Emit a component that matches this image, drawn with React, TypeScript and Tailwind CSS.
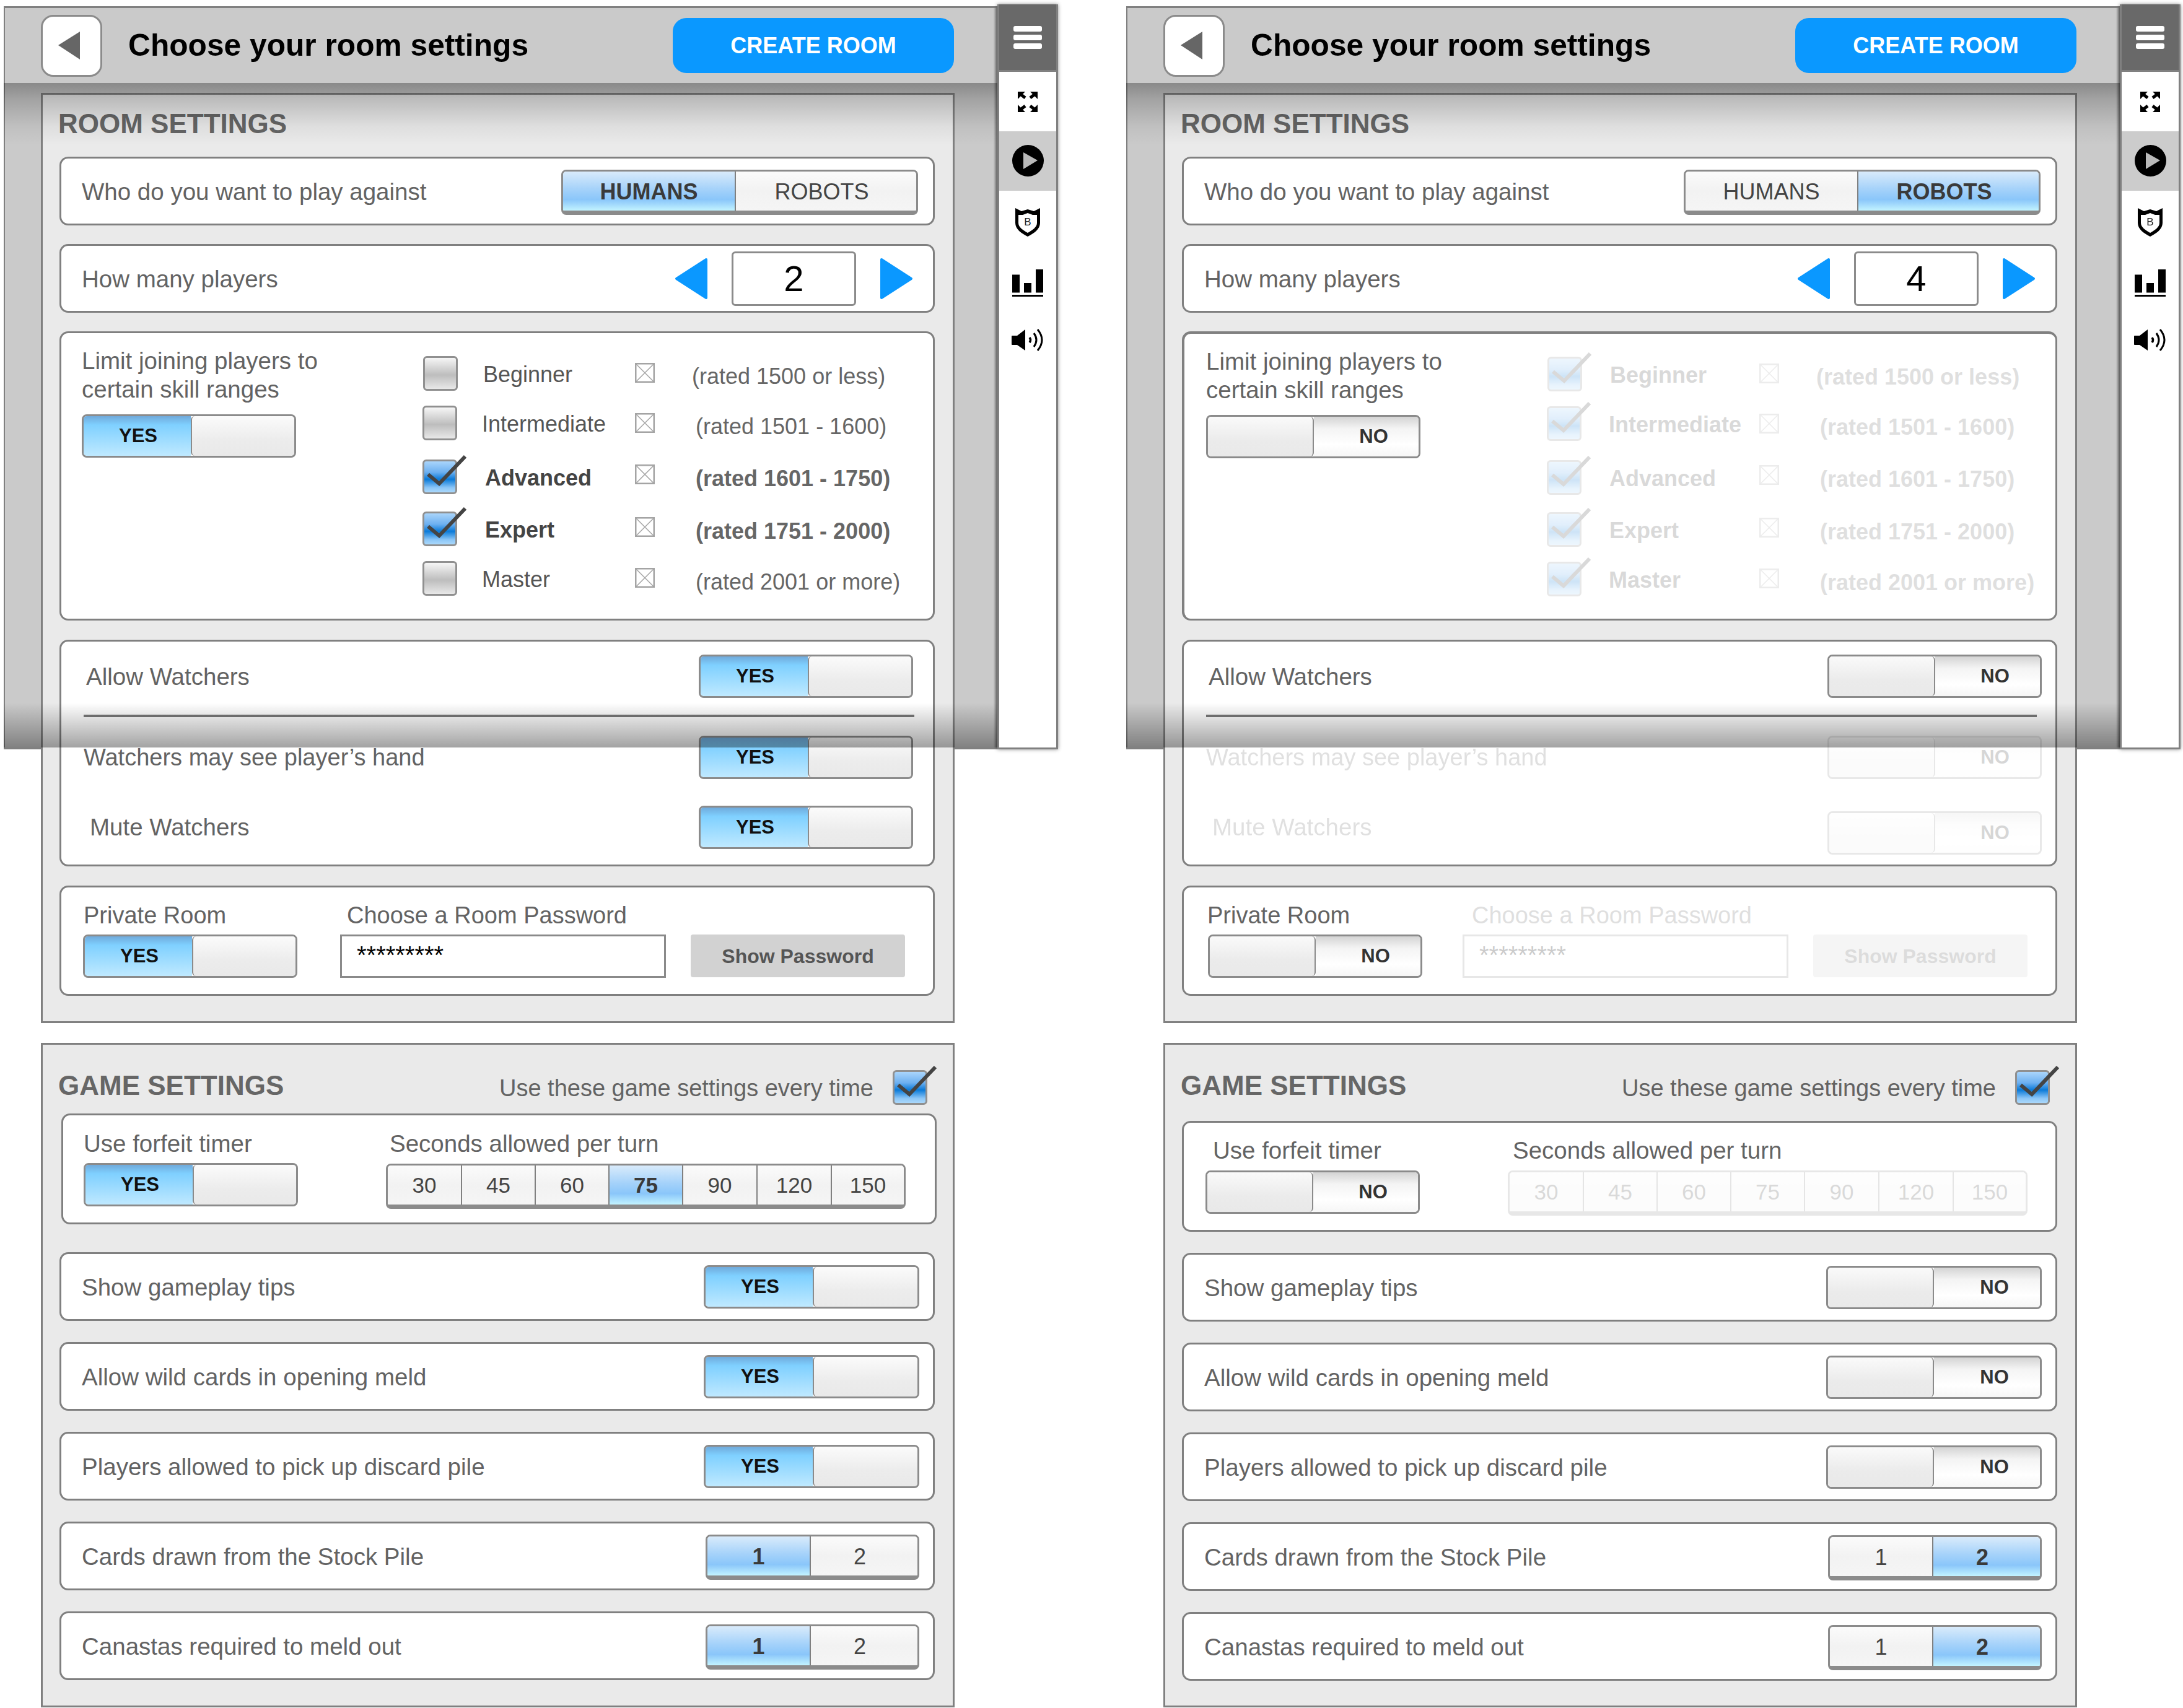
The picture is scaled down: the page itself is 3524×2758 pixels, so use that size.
import React from 'react';

const LABEL = 'text-[38.5px] leading-[46px] text-[#636363] whitespace-nowrap';
const LABEL_SM = 'text-[38px] leading-[46px] text-[#636363] whitespace-nowrap';
const CARD = 'rounded-[14px] border-[3px] border-[#808080] bg-white';

const RANGES = [
  { name: 'Beginner', rated: '(rated 1500 or less)', h: 'h-[80px]', boxMl: 'ml-[1px]', nameA: 'pl-[2px]', nameB: 'pl-[6px]', xMt: 'mt-[11px]', rMt: 'mt-[11px]', rA: 'pl-0', rB: 'pl-0', checked: false },
  { name: 'Intermediate', rated: '(rated 1501 - 1600)', h: 'h-[87px]', boxMl: 'ml-0', nameA: 'pl-0', nameB: 'pl-[4px]', xMt: 'mt-[12px]', rMt: 'mt-[12px]', rA: 'pl-[6px]', rB: 'pl-[6px]', checked: false },
  { name: 'Advanced', rated: '(rated 1601 - 1750)', h: 'h-[84px]', boxMl: 'ml-0', nameA: 'pl-[5px]', nameB: 'pl-[5px]', xMt: 'mt-[8px]', rMt: 'mt-[9px]', rA: 'pl-[6px]', rB: 'pl-[6px]', checked: true },
  { name: 'Expert', rated: '(rated 1751 - 2000)', h: 'h-[80px]', boxMl: 'ml-0', nameA: 'pl-[5px]', nameB: 'pl-[5px]', xMt: 'mt-[9px]', rMt: 'mt-[10px]', rA: 'pl-[6px]', rB: 'pl-[6px]', checked: true },
  { name: 'Master', rated: '(rated 2001 or more)', h: 'h-[80px]', boxMl: 'ml-0', nameA: 'pl-0', nameB: 'pl-[4px]', xMt: 'mt-[11px]', rMt: 'mt-[12px]', rA: 'pl-[6px]', rB: 'pl-[6px]', checked: false },
];

const Toggle = ({ on, wide = false, className = '' }: { on: boolean; wide?: boolean; className?: string }) =>
  on ? (
    <div className={`flex h-[70px] shrink-0 overflow-hidden rounded-[8px] border-[3px] border-[#8b8b8b] ${wide ? 'w-[348px]' : 'w-[346px]'} ${className}`}>
      <div className="flex w-[173px] items-center justify-center bg-[linear-gradient(#70aadb_0%,#7fd0ff_22%,#bfe9ff_100%)] pl-[3px] pt-[1px] text-[31px] font-bold text-[#111]">YES</div>
      <div className="flex-1 rounded-l-[6px] border-l-[2px] border-[#8b8b8b] bg-[linear-gradient(#fbfbfb,#ececec_60%,#e9e9e9)]" />
    </div>
  ) : (
    <div className={`flex h-[70px] shrink-0 overflow-hidden rounded-[8px] border-[3px] border-[#8b8b8b] ${wide ? 'w-[348px]' : 'w-[346px]'} ${className}`}>
      <div className="w-[171px] rounded-r-[6px] border-r-[2px] border-[#8b8b8b] bg-[linear-gradient(#fafafa,#ebebeb_60%,#e9e9e9)]" />
      <div className="flex flex-1 items-center justify-center bg-[linear-gradient(#d4d4d4_0%,#f4f4f4_30%,#ffffff_70%,#f6f6f6)] pl-[24px] pt-[1px] text-[31px] font-bold text-[#333]">NO</div>
    </div>
  );

const Seg = ({ items, selected, widths, className = '', textClass = 'text-[36px]' }: { items: string[]; selected: number; widths: string[]; className?: string; textClass?: string }) => (
  <div className={`flex h-[73px] shrink-0 overflow-hidden rounded-[8px] border-[3px] border-b-[7px] border-[#8b8b8b] ${className}`}>
    {items.map((item, i) => (
      <div
        key={item}
        className={`flex items-center justify-center pt-[2px] ${textClass} ${widths[i]} ${i > 0 ? 'border-l-[2px] border-[#808080]' : ''} ${
          items.length === 2 && i === 1 ? 'pr-[14px]' : ''
        } ${
          i === selected
            ? 'bg-[linear-gradient(#d9ebfb,#a5d2fa_45%,#8ac6fa_72%,#c2f3ff)] font-bold text-[#3a3a3a]'
            : 'bg-[linear-gradient(#fbfbfb,#f2f2f2_50%,#f5f5f5)] text-[#444]'
        }`}
      >
        {item}
      </div>
    ))}
  </div>
);

const CheckBox = ({ checked, className = '' }: { checked: boolean; className?: string }) => (
  <div
    className={`relative h-[56px] w-[56px] rounded-[6px] border-[3px] border-[#909090] ${
      checked
        ? 'bg-[linear-gradient(#aad5fb,#6db0f0_35%,#0a7ad8_58%,#8cc6f7_85%,#aad8fb)]'
        : 'bg-[linear-gradient(#f6f6f6,#bdbdbd_55%,#e8e8e8)]'
    } ${className}`}
  >
    {checked && (
      <svg className="absolute left-[-3px] top-[-3px] overflow-visible" width="56" height="56" viewBox="0 0 56 56" fill="none">
        <path d="M9 24 L27 39 L69 -5" stroke="#444" strokeWidth="6" />
      </svg>
    )}
  </div>
);

const XBox = ({ className = '' }: { className?: string }) => (
  <svg className={className} width="32" height="32" viewBox="0 0 32 32" fill="none" stroke="#a4a4a4">
    <rect x="1.25" y="1.25" width="29.5" height="29.5" strokeWidth="2.5" />
    <path d="M1 1 L31 31 M31 1 L1 31" strokeWidth="1.5" />
  </svg>
);

const Arrow = ({ right = false }: { right?: boolean }) => (
  <svg width="54" height="68" viewBox="0 0 54 68" fill="#0a98ff" stroke="#0a98ff" strokeWidth="4" strokeLinejoin="round">
    <path d={right ? 'M3 3 L51 34 L3 65 Z' : 'M51 3 L3 34 L51 65 Z'} />
  </svg>
);

const Row = ({ label, children }: { label: string; children: React.ReactNode }) => (
  <div className={`${CARD} flex h-[111px] items-center justify-between pl-[33px] pr-[22px]`}>
    <span className={`${LABEL} pt-[2px]`}>{label}</span>
    {children}
  </div>
);

const Sidebar = () => (
  <div className="absolute left-[1610px] top-[7px] z-30 flex h-[1203px] w-[98px] flex-col items-center border-x-[3px] border-b-[3px] border-[#808080] bg-white shadow-[0_0_6px_rgba(0,0,0,0.45)]">
    <div className="flex h-[109px] w-full items-center justify-center border-b-[3px] border-[#808080] bg-[#696969]">
      <svg width="46" height="37" viewBox="0 0 46 37" fill="#fff">
        <rect y="0" width="46" height="9" rx="3" />
        <rect y="14" width="46" height="9" rx="3" />
        <rect y="28" width="46" height="9" rx="3" />
      </svg>
    </div>
    <div className="flex h-[96px] w-full items-center justify-center">
      <svg width="32" height="33" viewBox="0 0 32 33">
        <g fill="#000" stroke="#000">
          <path d="M0 0 H12 L0 12 Z" strokeWidth="0" />
          <path d="M3 3 L12 10" strokeWidth="5" />
          <path d="M32 0 H20 L32 12 Z" strokeWidth="0" />
          <path d="M29 3 L20 10" strokeWidth="5" />
          <path d="M0 33 H12 L0 21 Z" strokeWidth="0" />
          <path d="M3 30 L12 23" strokeWidth="5" />
          <path d="M32 33 H20 L32 21 Z" strokeWidth="0" />
          <path d="M29 30 L20 23" strokeWidth="5" />
        </g>
      </svg>
    </div>
    <div className="flex h-[96px] w-full items-center justify-center bg-[#cccccc] pb-[2px]">
      <svg width="51" height="51" viewBox="0 0 51 51">
        <circle cx="25.5" cy="25.5" r="25.5" fill="#000" />
        <path d="M18 12 L41 25 L18 39 Z" fill="#b9b9b9" />
      </svg>
    </div>
    <div className="flex h-[96px] w-full items-center justify-center pt-[6px]">
      <svg width="40" height="46" viewBox="0 0 40 46">
        <path d="M0 0 L10 5 L20 2 L30 5 L40 0 V24 C40 34 30 41 20 46 C10 41 0 34 0 24 Z" fill="#000" />
        <path d="M5 11 L12 11 L20 8 L28 11 L35 11 V24 C35 31 27 36 20 40 C13 36 5 31 5 24 Z" fill="#fff" />
        <text x="20" y="28" textAnchor="middle" fontSize="17" fill="#222" fontFamily="Liberation Sans, sans-serif">B</text>
      </svg>
    </div>
    <div className="flex h-[96px] w-full items-center justify-center pt-[10px]">
      <svg width="50" height="44" viewBox="0 0 50 44" fill="#000">
        <rect x="0" y="8.5" width="12" height="29" />
        <rect x="19" y="22" width="12" height="15.5" />
        <rect x="38" y="0" width="12" height="37.5" />
        <rect x="0" y="41" width="50" height="3" />
      </svg>
    </div>
    <div className="flex h-[96px] w-full items-center justify-center pt-[2px]">
      <svg width="52" height="36" viewBox="0 0 52 36" fill="none">
        <path d="M0 12 Q0 11 1 11 H9 L22 1 V35 L9 26 H1 Q0 26 0 25 Z" fill="#000" />
        <path d="M29 14 Q32 18 29 22" stroke="#000" strokeWidth="3.5" />
        <path d="M36 7 Q44 18 36 29" stroke="#000" strokeWidth="3" />
        <path d="M42 1 Q56 18 42 35" stroke="#000" strokeWidth="3" />
      </svg>
    </div>
  </div>
);

const Screen = ({ alt, value }: { alt: boolean; value: string }) => {
  const on = !alt;
  const off = alt ? 'opacity-20' : '';
  const watcherPr = alt ? 'pr-[22px]' : 'pr-[32px]';
  return (
    <div className="relative h-[2758px] w-[1812px] shrink-0">
      {/* modal chrome behind the panels */}
      <div className="absolute left-[6px] top-[10px] h-[1200px] w-[1604px] border-y-[3px] border-l-[2px] border-[#808080] bg-[#cacaca]">
        <div className="flex h-[121px] items-center pl-[58px] pr-[70px]">
          <div className="flex h-[100px] w-[99px] shrink-0 items-center justify-start rounded-[20px] border-[3px] border-[#8b8b8b] bg-white pl-[25px]">
            <svg width="35" height="45" viewBox="0 0 35 45">
              <path d="M35 0 V45 L0 22 Z" fill="#666" />
            </svg>
          </div>
          <h1 className="ml-[42px] text-[49.7px] font-bold leading-none text-black">Choose your room settings</h1>
          <button className="ml-auto flex h-[89px] w-[454px] items-center justify-center rounded-[22px] bg-[#0a98ff] text-[36px] font-bold text-white">CREATE ROOM</button>
        </div>
      </div>

      <div className="relative z-10 flex flex-col pl-[66px] pt-[150px]">
        <section className="flex w-[1475px] flex-col border-[3px] border-[#808080] bg-[#eaeaea] pl-[27px] pr-[29px]">
          <h2 className="-ml-[2px] flex h-[100px] items-center pb-[6px] text-[44px] font-bold text-[#666]">ROOM SETTINGS</h2>
          <div className="flex flex-col gap-[30px]">
            <div className={`${CARD} flex h-[111px] items-center justify-between pl-[33px] pr-[24px]`}>
              <span className={`${LABEL} pt-[2px]`}>Who do you want to play against</span>
              <Seg className="mt-[4px]" items={['HUMANS', 'ROBOTS']} selected={alt ? 1 : 0} widths={['w-[277px]', 'w-[293px]']} />
            </div>
            <div className={`${CARD} flex h-[111px] items-center justify-between pl-[33px] pr-[32px]`}>
              <span className={`${LABEL} pt-[2px]`}>How many players</span>
              <div className="flex items-center gap-[38px]">
                <Arrow />
                <div className="flex h-[88px] w-[201px] items-center justify-center rounded-[6px] border-[3px] border-[#8b8b8b] bg-white text-[58px] text-black">{value}</div>
                <Arrow right />
              </div>
            </div>

            <div className={`${CARD} flex h-[467px] ${alt ? 'border-t-[4px] border-l-[4px]' : ''}`}>
              <div className={`w-[583px] shrink-0 pt-[22px] ${alt ? 'pl-[35px]' : 'pl-[33px]'}`}>
                <p className={LABEL}>Limit joining players to<br />certain skill ranges</p>
                <Toggle className="mt-[17px]" on={on} />
              </div>
              <div className={`flex flex-col pt-[37px] ${alt ? 'ml-[2px]' : ''} ${off}`}>
                {RANGES.map((r) => {
                  const bold = r.checked || alt;
                  return (
                    <div key={r.name} className={`grid grid-cols-[96px_247px_92px_1fr] ${r.h}`}>
                      <CheckBox className={r.boxMl} checked={r.checked || alt} />
                      <span className={`mt-[8px] text-[36px] leading-[44px] ${alt ? r.nameB : r.nameA} ${bold ? 'font-bold text-[#444]' : 'text-[#555]'}`}>{r.name}</span>
                      <XBox className={r.xMt} />
                      <span className={`${r.rMt} whitespace-nowrap text-[36px] leading-[44px] ${alt ? r.rB : r.rA} ${bold ? 'font-bold text-[#666]' : 'text-[#666]'}`}>{r.rated}</span>
                    </div>
                  );
                })}
              </div>
            </div>
          </div>

          <div className={`${CARD} mt-[31px] flex h-[366px] flex-col pt-[21px]`}>
            <div className={`flex items-center justify-between pl-[40px] ${watcherPr}`}>
              <span className={`${LABEL} mt-[2px]`}>Allow Watchers</span>
              <Toggle on={on} />
            </div>
            <div className="ml-[36px] mr-[30px] mt-[27px] h-[4px] bg-[#7a7a7a]" />
            <div className={`mt-[30px] flex items-center justify-between pl-[36px] ${watcherPr} ${off}`}>
              <span className={LABEL_SM}>Watchers may see player’s hand</span>
              <Toggle on={on} />
            </div>
            <div className={`flex items-center justify-between pl-[46px] ${watcherPr} ${alt ? 'mt-[52px] opacity-20' : 'mt-[43px]'}`}>
              <span className={`${LABEL} ${alt ? 'mb-[18px]' : ''}`}>Mute Watchers</span>
              <Toggle on={on} />
            </div>
          </div>

          <div className={`${CARD} mt-[31px] flex h-[178px] pt-[22px] ${alt ? 'pl-[39px]' : 'pl-[35px]'}`}>
            <div className="w-[346px] shrink-0">
              <div className={`${LABEL_SM} ${alt ? '-ml-[1px]' : 'ml-[1px]'}`}>Private Room</div>
              <Toggle className="mt-[8px]" on={on} />
            </div>
            <div className={`flex ${off} ${alt ? 'ml-[65px]' : 'ml-[69px]'}`}>
              <div className="w-[526px]">
                <div className={`${LABEL_SM} ${alt ? 'pl-[15px]' : 'pl-[11px]'}`}>Choose a Room Password</div>
                <div className="mt-[8px] h-[70px] border-[3px] border-[#8a8a8a] bg-white pl-[24px] pt-[8px] text-[40px] leading-[44px] text-black">*********</div>
              </div>
              <div className="ml-[40px] mt-[54px] flex h-[69px] w-[346px] items-center justify-center rounded-[4px] bg-[#d2d2d2] text-[32px] font-bold text-[#555]">Show Password</div>
            </div>
          </div>
          <div className="h-[41px]" />
        </section>

        <section className="mt-[32px] flex h-[1073px] w-[1475px] flex-col border-[3px] border-[#808080] bg-[#eaeaea] pl-[27px] pr-[29px]">
          <div className={`flex items-start justify-between pt-[41px] ${alt ? 'h-[123px]' : 'h-[111px]'}`}>
            <h2 className="-ml-[2px] text-[44px] font-bold leading-[50px] text-[#666]">GAME SETTINGS</h2>
            <div className="mr-[12px] flex items-start gap-[31px]">
              <span className={`${LABEL_SM} mt-[6px]`}>Use these game settings every time</span>
              <CheckBox checked />
            </div>
          </div>

          <div className={`${CARD} flex h-[179px] ${alt ? 'pl-[35px] pt-[22px]' : '-mr-[3px] ml-[3px] pl-[33px] pt-[23px]'}`}>
            <div className="w-[346px] shrink-0">
              <div className={`${LABEL} ${alt ? 'pl-[12px]' : ''}`}>Use forfeit timer</div>
              <Toggle className={alt ? 'mt-[9px]' : 'mt-[8px]'} on={on} />
            </div>
            <div className="ml-[142px]">
              <div className={`${LABEL} ${alt ? 'pl-[8px]' : 'pl-[6px]'}`}>Seconds allowed per turn</div>
              <Seg
                className={`mt-[9px] w-[839px] ${off}`}
                textClass="text-[35px]"
                items={['30', '45', '60', '75', '90', '120', '150']}
                selected={alt ? -1 : 3}
                widths={['w-[118px]', 'w-[119px]', 'w-[119px]', 'w-[119px]', 'w-[120px]', 'w-[120px]', 'w-[118px]']}
              />
            </div>
          </div>

          <div className={`flex flex-col gap-[34px] ${alt ? 'mt-[34px]' : 'mt-[45px]'}`}>
            <Row label="Show gameplay tips"><Toggle wide on={on} /></Row>
            <Row label="Allow wild cards in opening meld"><Toggle wide on={on} /></Row>
            <Row label="Players allowed to pick up discard pile"><Toggle wide on={on} /></Row>
            <Row label="Cards drawn from the Stock Pile">
              <Seg className="mt-[4px]" items={['1', '2']} selected={alt ? 1 : 0} widths={['w-[165px]', 'w-[174px]']} />
            </Row>
            <Row label="Canastas required to meld out">
              <Seg className="mt-[4px]" items={['1', '2']} selected={alt ? 1 : 0} widths={['w-[165px]', 'w-[174px]']} />
            </Row>
          </div>
        </section>
      </div>

      {/* shadows cast over the panels by the modal chrome */}
      <div className="pointer-events-none absolute left-[6px] top-[134px] z-20 h-[100px] w-[1604px] bg-[linear-gradient(rgba(0,0,0,0.32),rgba(0,0,0,0.2)_25%,rgba(0,0,0,0.05)_70%,rgba(0,0,0,0))]" />
      <div className="pointer-events-none absolute left-[6px] top-[1135px] z-20 h-[72px] w-[1604px] bg-[linear-gradient(rgba(0,0,0,0),rgba(0,0,0,0.36))]" />
      <div className="pointer-events-none absolute left-[1604px] top-[13px] z-20 h-[1194px] w-[6px] bg-[linear-gradient(90deg,rgba(0,0,0,0),rgba(0,0,0,0.4))]" />
      <Sidebar />
    </div>
  );
};

export default function App() {
  return (
    <div className="flex h-[2758px] w-[3524px] overflow-hidden bg-white font-['Liberation_Sans',Arial,sans-serif]">
      <Screen alt={false} value="2" />
      <Screen alt value="4" />
    </div>
  );
}
